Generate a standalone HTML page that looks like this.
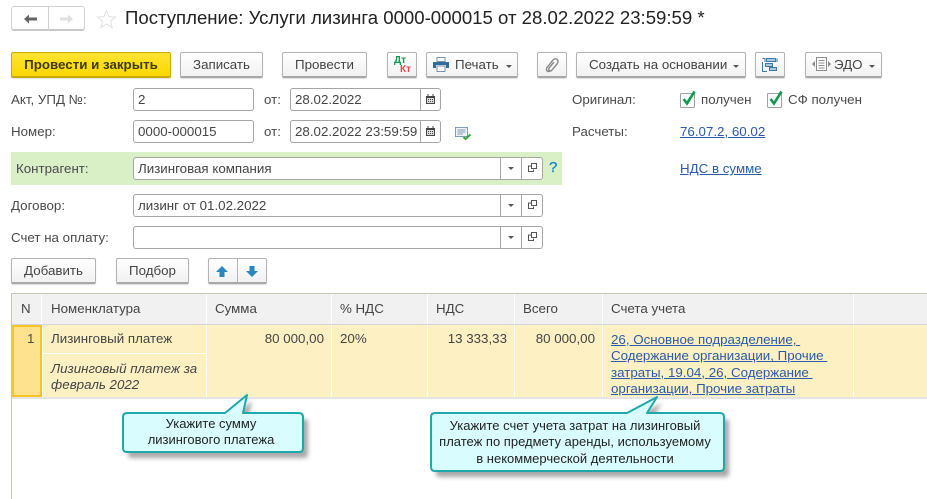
<!DOCTYPE html>
<html lang="ru"><head><meta charset="utf-8"><title>Поступление</title>
<style>
html,body{margin:0;padding:0;background:#fff}
#p{position:relative;width:927px;height:499px;overflow:hidden;background:#fff;font-family:"Liberation Sans",Arial,sans-serif;font-size:13.33px;color:#4a4a4a}
#p div,#p a,#p svg{position:absolute;white-space:nowrap;box-sizing:border-box}
.t{line-height:14px}
.b{height:26px;border:1px solid #b3b3b3;border-bottom:2px solid #a8a8a8;border-radius:2px;background:linear-gradient(#fff,#f1f1f1);text-align:center;line-height:24px;color:#444;top:52px;box-shadow:0 1px 1px #ddd}
.i{height:23px;border:1px solid #a5a5a5;border-radius:3px;background:#fff;line-height:21px;padding-left:4px;color:#444}
.v{width:1px;background:#a5a5a5;height:21px;top:0}
.h{top:294px;height:30px;background:#f1f1f1;line-height:29px;padding-left:9px;color:#444}
.c{top:325px;height:72px;background:#fdf1c4;color:#444;line-height:14px}
a{color:#2a5aa8;text-decoration:underline}
</style></head><body><div id="p">

<div style="left:11px;top:6px;width:74px;height:25px;border:1px solid #d2d2d2;border-bottom:2px solid #c8c8c8;border-radius:3px;background:#fff"></div>
<div style="left:48px;top:6px;width:1px;height:24px;background:#d2d2d2"></div>
<svg style="left:23px;top:12px" width="15" height="14"><path d="M1 7 L6 2.5 V5.5 H14 V8.5 H6 V11.5 Z" fill="#666"/></svg>
<svg style="left:59px;top:12px" width="15" height="14"><path d="M14 7 L9 2.5 V5.5 H1 V8.5 H9 V11.5 Z" fill="#e0e0e0"/></svg>
<svg style="left:96px;top:9px" width="21" height="20"><path d="M10.5 1.5 L13 7.6 L19.5 8 L14.5 12.2 L16.2 18.6 L10.5 15 L4.8 18.6 L6.5 12.2 L1.5 8 L8 7.6 Z" fill="#fff" stroke="#e2e2e2" stroke-width="1"/></svg>
<div style="left:125px;top:7px;font-size:18.6px;line-height:22px;color:#222">Поступление: Услуги лизинга 0000-000015 от 28.02.2022 23:59:59 *</div>

<div class="b" style="left:11px;width:160px;background:linear-gradient(#ffe433,#fbd800);border-color:#c9ab00;color:#3d3a10;font-weight:bold;font-size:13.33px">Провести и закрыть</div>
<div class="b" style="left:180px;width:83px">Записать</div>
<div class="b" style="left:282px;width:85px">Провести</div>
<div class="b" style="left:387px;width:30px"></div>
<div class="t" style="left:394px;top:54px;font-size:10px;font-weight:bold;color:#0f9a50">Дт</div>
<div class="t" style="left:400px;top:63px;font-size:10px;font-weight:bold;color:#e8484d">Кт</div>
<div class="b" style="left:426px;width:92px;text-align:left;padding-left:28px">Печать</div>
<svg style="left:433px;top:57px" width="16" height="15"><rect x="4" y="0.5" width="8" height="4" fill="#fff" stroke="#7a93a8"/><path d="M0 5 H16 V11 H13 V8 H3 V11 H0 Z" fill="#2f6d9e"/><rect x="4" y="9" width="8" height="5.5" fill="#fff" stroke="#7a93a8"/></svg>
<svg style="left:506px;top:65px" width="6" height="3"><path d="M0 0 H6 L3 3 Z" fill="#555"/></svg>
<div class="b" style="left:537px;width:30px"></div>
<svg style="left:545px;top:57px" width="15" height="16"><path d="M5 14 C2.5 15.5 0.5 13 2 10.5 L8 3 C9.5 1 13 1.5 13 4.5 C13 5.5 12.5 6 12 7 L7 13 C5.5 15 3 13.5 4 11 L9 5" fill="none" stroke="#888" stroke-width="1.4"/></svg>
<div class="b" style="left:576px;width:170px;text-align:left;padding-left:12px">Создать на основании</div>
<svg style="left:733px;top:65px" width="6" height="3"><path d="M0 0 H6 L3 3 Z" fill="#555"/></svg>
<div class="b" style="left:755px;width:30px"></div>
<svg style="left:762px;top:57px" width="16" height="16"><g fill="#a9c8dc" stroke="#3b7ba6"><rect x="4.5" y="1.5" width="9" height="3"/><rect x="3.5" y="6.5" width="7" height="3"/><rect x="7.5" y="10.5" width="7" height="3"/></g><path d="M0.5 5 V14.5 H5 M15 1.5 V5 M0.5 1.5 H3 V5" fill="none" stroke="#3b7ba6"/></svg>
<div class="b" style="left:805px;width:77px;text-align:left;padding-left:28px">ЭДО</div>
<svg style="left:812px;top:57px" width="19" height="15"><g fill="none" stroke="#8b8b8b"><rect x="4.5" y="0.5" width="10" height="13" fill="#fff"/><path d="M6.5 3.5 H12.5 M6.5 6 H12.5 M6.5 8.5 H12.5 M6.5 11 H12.5"/></g><path d="M0 7 L3 4 V10 Z M19 7 L16 4 V10 Z" fill="#8b8b8b"/></svg>
<svg style="left:869px;top:65px" width="6" height="3"><path d="M0 0 H6 L3 3 Z" fill="#555"/></svg>

<div class="t" style="left:11px;top:93px">Акт, УПД №:</div>
<div class="i" style="left:133px;top:88px;width:121px">2</div>
<div class="t" style="left:264px;top:93px">от:</div>
<div class="i" style="left:290px;top:88px;width:151px">28.02.2022<div class="v" style="left:129px"></div></div>
<svg style="left:426px;top:94px" width="10" height="11"><path d="M0 2 H9 V10 H0 Z" fill="#444"/><rect x="1" y="4" width="7" height="5" fill="#ddd"/><path d="M2 0 V2 M7 0 V2" stroke="#444"/><path d="M2 5 H3 V6 H2 Z M4 5 H5 V6 H4 Z M6 5 H7 V6 H6 Z M2 7 H3 V8 H2 Z M4 7 H5 V8 H4 Z M6 7 H7 V8 H6 Z" fill="#444"/></svg>

<div class="t" style="left:11px;top:125px">Номер:</div>
<div class="i" style="left:133px;top:120px;width:121px">0000-000015</div>
<div class="t" style="left:264px;top:125px">от:</div>
<div class="i" style="left:290px;top:120px;width:151px;overflow:hidden">28.02.2022 23:59:59<div style="left:129px;top:0;width:22px;height:21px;background:#fff;border-left:1px solid #a5a5a5"></div></div>
<svg style="left:426px;top:126px" width="10" height="11"><path d="M0 2 H9 V10 H0 Z" fill="#444"/><rect x="1" y="4" width="7" height="5" fill="#ddd"/><path d="M2 0 V2 M7 0 V2" stroke="#444"/><path d="M2 5 H3 V6 H2 Z M4 5 H5 V6 H4 Z M6 5 H7 V6 H6 Z M2 7 H3 V8 H2 Z M4 7 H5 V8 H4 Z M6 7 H7 V8 H6 Z" fill="#444"/></svg>
<svg style="left:455px;top:127px" width="17" height="13"><rect x="0.5" y="0.5" width="12" height="9" fill="#eef3f7" stroke="#7f9db5"/><path d="M2.5 3 H10.5 M2.5 5 H10.5 M2.5 7 H8" stroke="#7f9db5"/><path d="M8.5 10 L10.5 12 L15.5 7.5" fill="none" stroke="#3aa53a" stroke-width="2"/></svg>

<div style="left:11px;top:152px;width:551px;height:33px;background:#d9f0c7"></div>
<div class="t" style="left:16px;top:162px">Контрагент:</div>
<div class="i" style="left:133px;top:157px;width:410px">Лизинговая компания<div class="v" style="left:366px"></div><div class="v" style="left:387px"></div></div>
<div class="t" style="left:549px;top:161px;font-size:15px;color:#1a86c8;-webkit-text-stroke:.3px #1a86c8">?</div>

<div class="t" style="left:11px;top:199px">Договор:</div>
<div class="i" style="left:133px;top:194px;width:410px">лизинг от 01.02.2022<div class="v" style="left:366px"></div><div class="v" style="left:387px"></div></div>
<div class="t" style="left:11px;top:231px">Счет на оплату:</div>
<div class="i" style="left:133px;top:226px;width:410px"><div class="v" style="left:366px"></div><div class="v" style="left:387px"></div></div>

<svg style="left:508px;top:167px" width="6" height="3"><path d="M0 0 H6 L3 3 Z" fill="#555"/></svg>
<svg style="left:508px;top:204px" width="6" height="3"><path d="M0 0 H6 L3 3 Z" fill="#555"/></svg>
<svg style="left:508px;top:236px" width="6" height="3"><path d="M0 0 H6 L3 3 Z" fill="#555"/></svg>
<svg style="left:528px;top:163px" width="10" height="10"><path d="M3.5 0.5 H8.5 V5.5 H3.5 Z M3 3 H0.5 V8.5 H5.5 V6.5" fill="#fff" stroke="#555"/></svg>
<svg style="left:528px;top:200px" width="10" height="10"><path d="M3.5 0.5 H8.5 V5.5 H3.5 Z M3 3 H0.5 V8.5 H5.5 V6.5" fill="#fff" stroke="#555"/></svg>
<svg style="left:528px;top:232px" width="10" height="10"><path d="M3.5 0.5 H8.5 V5.5 H3.5 Z M3 3 H0.5 V8.5 H5.5 V6.5" fill="#fff" stroke="#555"/></svg>

<div class="t" style="left:572px;top:93px">Оригинал:</div>
<svg style="left:680px;top:90px" width="17" height="18"><rect x="0.5" y="3.5" width="14" height="14" rx="1" fill="#fff" stroke="#a0a0a0"/><path d="M3.5 9 L7 13.5 L14.5 1.5" fill="none" stroke="#0f9a50" stroke-width="2.6"/></svg>
<div class="t" style="left:701px;top:93px">получен</div>
<svg style="left:767px;top:90px" width="17" height="18"><rect x="0.5" y="3.5" width="14" height="14" rx="1" fill="#fff" stroke="#a0a0a0"/><path d="M3.5 9 L7 13.5 L14.5 1.5" fill="none" stroke="#0f9a50" stroke-width="2.6"/></svg>
<div class="t" style="left:788px;top:93px">СФ получен</div>
<div class="t" style="left:572px;top:125px">Расчеты:</div>
<a class="t" style="left:680px;top:125px">76.07.2, 60.02</a>
<a class="t" style="left:680px;top:162px">НДС в сумме</a>

<div class="b" style="left:11px;top:258px;width:85px">Добавить</div>
<div class="b" style="left:116px;top:258px;width:73px">Подбор</div>
<div class="b" style="left:208px;top:258px;width:59px"></div>
<div style="left:237px;top:258px;width:1px;height:25px;background:#b3b3b3"></div>
<svg style="left:216px;top:266px" width="12" height="11"><path d="M6 0 L12 6 H8.5 V11 H3.5 V6 H0 Z" fill="#2b86bf"/></svg>
<svg style="left:246px;top:266px" width="12" height="11"><path d="M6 11 L12 5 H8.5 V0 H3.5 V5 H0 Z" fill="#2b86bf"/></svg>

<div style="left:11px;top:293px;width:916px;height:1px;background:#c9c6b8"></div>
<div style="left:11px;top:293px;width:1px;height:206px;background:#c9c6b8"></div>
<div style="left:12px;top:324px;width:915px;height:1px;background:#d4d4d4"></div>
<div style="left:12px;top:397px;width:915px;height:2px;background:#e4e4e4"></div>
<div class="h" style="left:12px;width:29px">N</div>
<div class="h" style="left:42px;width:164px">Номенклатура</div>
<div class="h" style="left:207px;width:124px;padding-left:8px">Сумма</div>
<div class="h" style="left:332px;width:95px;padding-left:8px">% НДС</div>
<div class="h" style="left:428px;width:86px;padding-left:8px">НДС</div>
<div class="h" style="left:515px;width:87px;padding-left:8px">Всего</div>
<div class="h" style="left:603px;width:250px;padding-left:8px">Счета учета</div>
<div class="h" style="left:854px;width:73px"></div>

<div style="left:12px;top:325px;width:30px;height:72px;background:#fee28d;border:2px solid #f8c425"></div>
<div class="t" style="left:27px;top:332px">1</div>
<div class="c" style="left:43px;width:163px;height:28px;padding:7px 0 0 8px">Лизинговый платеж</div>
<div class="c" style="left:43px;top:354px;width:163px;height:43px;padding:7px 0 0 8px;line-height:16px;font-style:italic">Лизинговый платеж за<br>февраль 2022</div>
<div class="c" style="left:207px;width:124px;padding:7px 7px 0 0;text-align:right">80 000,00</div>
<div class="c" style="left:332px;width:95px;padding:7px 0 0 8px">20%</div>
<div class="c" style="left:428px;width:86px;padding:7px 7px 0 0;text-align:right">13 333,33</div>
<div class="c" style="left:515px;width:87px;padding:7px 7px 0 0;text-align:right">80 000,00</div>
<div class="c" style="left:603px;width:250px;"></div>
<div class="c" style="left:854px;width:73px"></div>
<a style="left:611px;top:332px;line-height:16.3px">26, Основное подразделение,&nbsp;<br>Содержание организации, Прочие&nbsp;<br>затраты, 19.04, 26, Содержание&nbsp;<br>организации, Прочие затраты</a>

<svg style="left:115px;top:390px" width="625" height="100">
<defs><filter id="s" x="-10%" y="-20%" width="125%" height="150%"><feGaussianBlur stdDeviation="2.2"/></filter></defs>
<g fill="#6f6f6f" opacity=".6" filter="url(#s)" transform="translate(5,6)">
<path d="M12 23 H110 L132 5 L128 23 H184 Q188 23 188 27 V58 Q188 62 184 62 H12 Q8 62 8 58 V27 Q8 23 12 23 Z"/>
<path d="M320 23 H512 L542 7 L532 23 H605 Q609 23 609 27 V77 Q609 81 605 81 H320 Q316 81 316 77 V27 Q316 23 320 23 Z"/>
</g>
<g fill="#d9fdff" stroke="#1fa8ab" stroke-width="2" stroke-linejoin="round">
<path d="M12 23 H110 L132 5 L128 23 H184 Q188 23 188 27 V58 Q188 62 184 62 H12 Q8 62 8 58 V27 Q8 23 12 23 Z"/>
<path d="M320 23 H512 L542 7 L532 23 H605 Q609 23 609 27 V77 Q609 81 605 81 H320 Q316 81 316 77 V27 Q316 23 320 23 Z"/>
</g>
</svg>
<div style="left:120px;top:416px;width:182px;text-align:center;line-height:16px;font-size:13px;color:#222">Укажите сумму<br>лизингового платежа</div>
<div style="left:428px;top:418px;width:294px;text-align:center;line-height:16.3px;font-size:13px;color:#222">Укажите счет учета затрат на лизинговый<br>платеж по предмету аренды, используемому<br>в некоммерческой деятельности</div>
</div></body></html>
